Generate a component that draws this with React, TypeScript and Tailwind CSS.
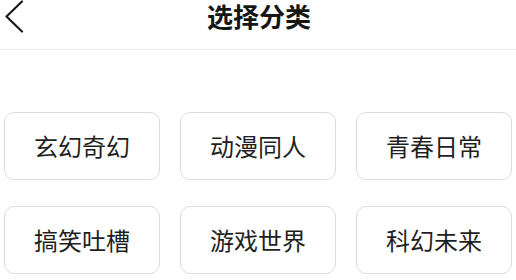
import React from "react";

const items = ["玄幻奇幻", "动漫同人", "青春日常", "搞笑吐槽", "游戏世界", "科幻未来"];

export default function App() {
  return (
    <div
      className="w-[516px] h-[280px] bg-white overflow-hidden"
      style={{ fontFamily: '"Noto Sans CJK SC", "Noto Sans", sans-serif' }}
    >
      <div className="relative h-[50px] border-b border-[#ececec] flex items-start justify-center pt-[1px]">
        <button className="absolute left-[4px] top-0 w-[20px] h-[33px] flex items-center justify-center">
          <svg width="20" height="33" viewBox="0 0 20 33" fill="none">
            <path d="M18 1.5 L2.5 16.5 L18 31.5" stroke="#1a1a1a" strokeWidth="2.2" strokeLinecap="round" strokeLinejoin="round" />
          </svg>
        </button>
        <h1 className="text-[26px] leading-[30px] font-bold text-[#161616] ml-[2px]">选择分类</h1>
      </div>
      <div className="grid grid-cols-3 gap-x-[20px] gap-y-[26px] px-[4px] pt-[62px]">
        {items.map((t) => (
          <div
            key={t}
            className="h-[68px] rounded-[10px] border border-[#dcdcdc] flex items-center justify-center text-[24px] text-[#1f1f1f]"
          >
            {t}
          </div>
        ))}
      </div>
    </div>
  );
}
